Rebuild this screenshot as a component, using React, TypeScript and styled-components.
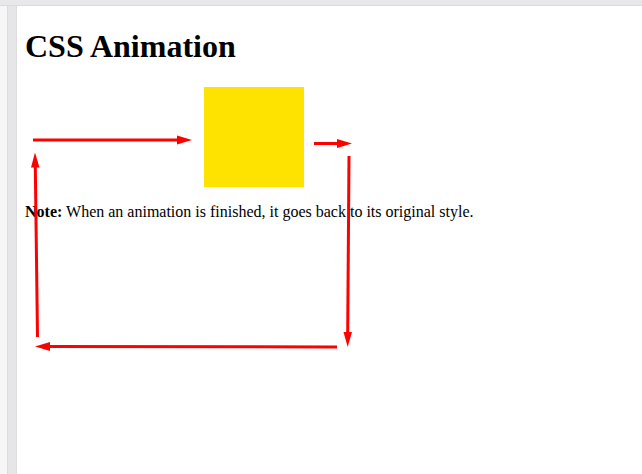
import React from "react";
import styled, { createGlobalStyle } from "styled-components";

const GlobalStyle = createGlobalStyle`
  html, body {
    margin: 0;
    padding: 0;
    background: #ffffff;
  }
  body {
    font-family: "Liberation Serif", "Times New Roman", serif;
    color: #000;
  }
`;

const Shell = styled.div`
  position: relative;
  display: flex;
  flex-direction: column;
  width: 642px;
  height: 474px;
  overflow: hidden;
`;

const TopBar = styled.div`
  height: 5px;
  flex: none;
  background: #e8e8ea;
  border-bottom: 1px solid #dadadc;
`;

const Body = styled.div`
  display: flex;
  flex: 1;
`;

const Gutter = styled.div`
  width: 7px;
  flex: none;
  background: #f6f6f6;
`;

const Strip = styled.div`
  width: 8px;
  flex: none;
  background: #e6e6e8;
  border-left: 1px solid #dcdcde;
  border-right: 1px solid #dcdcde;
`;

const Page = styled.div`
  flex: 1;
  padding: 0 8px;
  background: #fff;
`;

const Title = styled.h1`
  font-size: 32px;
  font-weight: bold;
  margin: 22px 0 22px;
`;

const Box = styled.div`
  width: 100px;
  height: 100px;
  margin-left: 179px;
  background: #ffe300;
`;

const Note = styled.p`
  font-size: 16px;
  margin: 16px 0;
`;

const Overlay = styled.svg`
  position: absolute;
  left: 0;
  top: 0;
  pointer-events: none;
`;

const RED = "#ff0000";

export default function App() {
  return (
    <>
      <GlobalStyle />
      <Shell>
        <TopBar />
        <Body>
          <Gutter />
          <Strip />
          <Page>
            <Title>CSS Animation</Title>
            <Box />
            <Note>
              <b>Note:</b> When an animation is finished, it goes back to its original style.
            </Note>
          </Page>
        </Body>
        <Overlay width="642" height="474" viewBox="0 0 642 474">
          <g stroke={RED} strokeWidth="3" fill="none">
            <line x1="33" y1="140" x2="179" y2="140" />
            <line x1="314" y1="143.5" x2="339" y2="143.5" />
            <line x1="349" y1="156" x2="347.7" y2="334" />
            <line x1="337" y1="347" x2="48" y2="346.5" />
            <line x1="37.5" y1="337" x2="35.3" y2="166" />
          </g>
          <g fill={RED}>
            <polygon points="177,135.5 192,140 177,144.5" />
            <polygon points="337,139 352,143.5 337,148" />
            <polygon points="343.5,332 352,332 347.7,347" />
            <polygon points="50,342 50,351 35,346.5" />
            <polygon points="31,167.5 39.5,167.5 35,152.5" />
          </g>
        </Overlay>
      </Shell>
    </>
  );
}
